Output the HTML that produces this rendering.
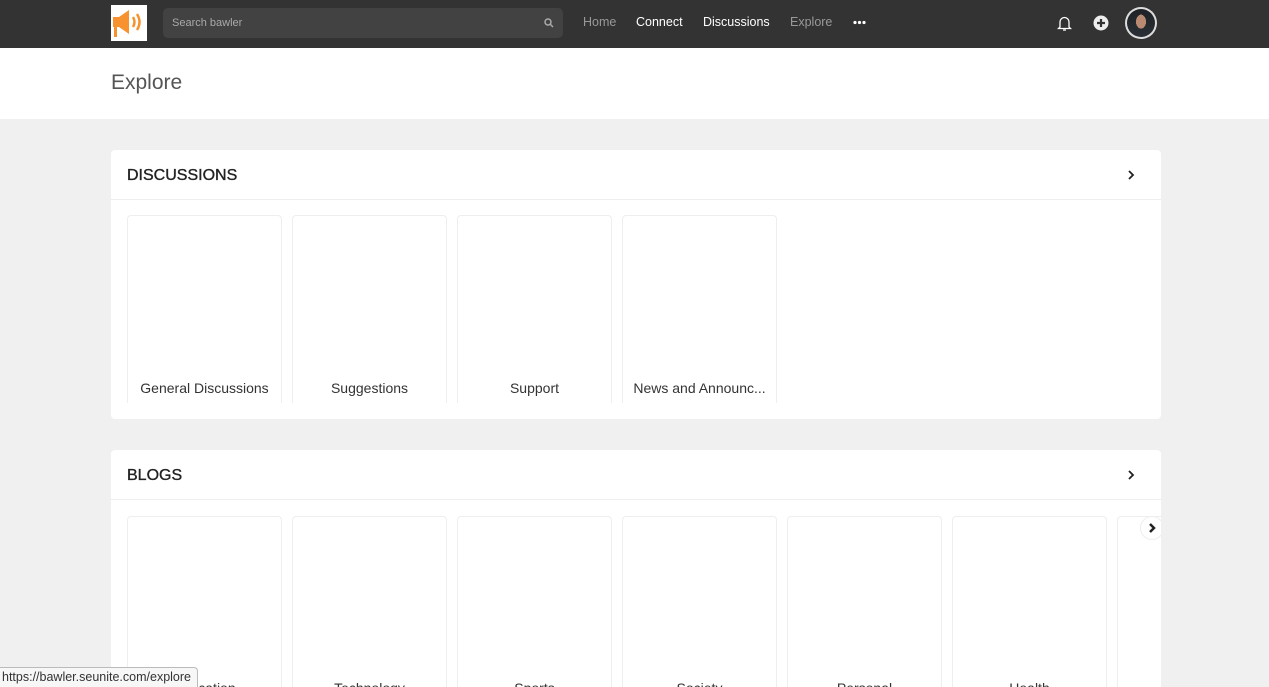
<!DOCTYPE html>
<html style="width:1269px;height:687px;overflow:hidden"><head><style>
*{box-sizing:border-box;margin:0;padding:0}
body{width:1269px;height:687px;overflow:hidden;background:#f0f0f0;font-family:"Liberation Sans",Arial,sans-serif;position:relative}
.hdr{position:absolute;left:0;top:0;width:1269px;height:48px;background:#333}
.logo{position:absolute;left:111px;top:5px;width:36px;height:36px;background:#fff}
.search{position:absolute;left:163px;top:8px;width:400px;height:30px;background:#424242;border-radius:5px;color:#aaa;font-size:11px;line-height:30px;padding-left:9px}
.nav{position:absolute;top:15px;font-size:12.5px}
.title{position:absolute;left:0;top:48px;width:1269px;height:71px;background:#fff}
.title span{position:absolute;left:111px;top:23px;font-size:21px;color:#555}
.card{position:absolute;left:111px;width:1050px;background:#fff;border-radius:4px;overflow:hidden}
.ch{height:50px;border-bottom:1px solid #eee;position:relative}
.ch b{position:absolute;left:16px;top:17px;font-size:16px;color:#222;font-weight:normal;-webkit-text-stroke:0.35px #222}
.tile{position:absolute;width:155px;border:1px solid #eee;border-bottom:none;border-radius:4px 4px 0 0;background:#fff;text-align:center;font-size:14px;color:#333;overflow:hidden}
.tile div{position:absolute;width:100%;top:163px;height:18px;line-height:18px}
</style></head><body>
<div class="hdr">
 <div class="logo"><svg width="36" height="36" viewBox="0 0 36 36"><path d="M2 12h6l10-7v24l-10-7h-2v10h-3v-10h-1z" fill="#f7922e"/><path d="M22 12q3 5 0 10M26 9q5 8 0 16" stroke="#f7922e" stroke-width="2.5" fill="none"/></svg></div>
 <div class="search">Search bawler<svg style="position:absolute;right:9px;top:10px" width="10" height="10"><circle cx="4" cy="4" r="3" stroke="#aaa" stroke-width="1.5" fill="none"/><path d="M6 6l3 3" stroke="#aaa" stroke-width="1.5"/></svg></div>
 <div class="nav" style="left:583px;color:#999">Home</div>
 <div class="nav" style="left:636px;color:#fff">Connect</div>
 <div class="nav" style="left:703px;color:#fff">Discussions</div>
 <div class="nav" style="left:790px;color:#999">Explore</div>
 <svg style="position:absolute;left:853px;top:20px" width="13" height="5"><circle cx="2" cy="2.5" r="1.6" fill="#fff"/><circle cx="6.5" cy="2.5" r="1.6" fill="#fff"/><circle cx="11" cy="2.5" r="1.6" fill="#fff"/></svg>
 <svg style="position:absolute;left:1057px;top:15px" width="15" height="17"><path d="M3 12V7a4.5 4.5 0 0 1 9 0v5l1.5 1.5h-12z" stroke="#fff" stroke-width="1.3" fill="none"/><path d="M6 15h3" stroke="#fff" stroke-width="1.3"/></svg>
 <svg style="position:absolute;left:1093px;top:15px" width="16" height="16"><circle cx="8" cy="8" r="7.5" fill="#eee"/><path d="M8 4v8M4 8h8" stroke="#333" stroke-width="2.2"/></svg>
 <div style="position:absolute;left:1125px;top:7px;width:32px;height:32px;border-radius:50%;background:#ddd;padding:2px"><div style="width:28px;height:28px;border-radius:50%;background:radial-gradient(ellipse 5px 7px at 50% 45%,#b98a72 0 100%,transparent 100%),linear-gradient(#1e2226,#2a3036)"></div></div>
</div>
<div class="title"><span>Explore</span></div>
<div class="card" style="top:150px;height:269px">
 <div class="ch"><b>DISCUSSIONS</b><svg style="position:absolute;right:26px;top:19px" width="8" height="12"><path d="M2 2l4 4-4 4" stroke="#222" stroke-width="1.8" fill="none"/></svg></div>
 <div class="tile" style="left:16px;top:65px;height:188px"><div>General Discussions</div></div>
 <div class="tile" style="left:181px;top:65px;height:188px"><div>Suggestions</div></div>
 <div class="tile" style="left:346px;top:65px;height:188px"><div>Support</div></div>
 <div class="tile" style="left:511px;top:65px;height:188px"><div>News and Announc...</div></div>
</div>
<div class="card" style="top:450px;height:237px;border-radius:4px 4px 0 0">
 <div class="ch"><b>BLOGS</b><svg style="position:absolute;right:26px;top:19px" width="8" height="12"><path d="M2 2l4 4-4 4" stroke="#222" stroke-width="1.8" fill="none"/></svg></div>
 <div class="tile" style="left:16px;top:66px;height:171px"><div style="top:162px">Education</div></div>
 <div class="tile" style="left:181px;top:66px;height:171px"><div style="top:162px">Technology</div></div>
 <div class="tile" style="left:346px;top:66px;height:171px"><div style="top:162px">Sports</div></div>
 <div class="tile" style="left:511px;top:66px;height:171px"><div style="top:162px">Society</div></div>
 <div class="tile" style="left:676px;top:66px;height:171px"><div style="top:162px">Personal</div></div>
 <div class="tile" style="left:841px;top:66px;height:171px"><div style="top:162px">Health</div></div>
 <div class="tile" style="left:1006px;top:66px;height:171px"></div>
 <div style="position:absolute;left:1029px;top:66px;width:24px;height:24px;border-radius:50%;background:#fff;border:1px solid #eee"><svg width="22" height="22"><path d="M9 7l4 4-4 4" stroke="#222" stroke-width="2.5" fill="none"/></svg></div>
</div>
<div style="position:absolute;left:0;top:667px;width:198px;height:20px;padding-left:2px;background:#f7f7f7;border:1px solid #bbb;border-bottom:none;border-left:none;border-radius:0 4px 0 0;font-size:12.5px;color:#333;line-height:18px;white-space:nowrap;overflow:hidden">https://bawler.seunite.com/explore</div>
</body></html>
